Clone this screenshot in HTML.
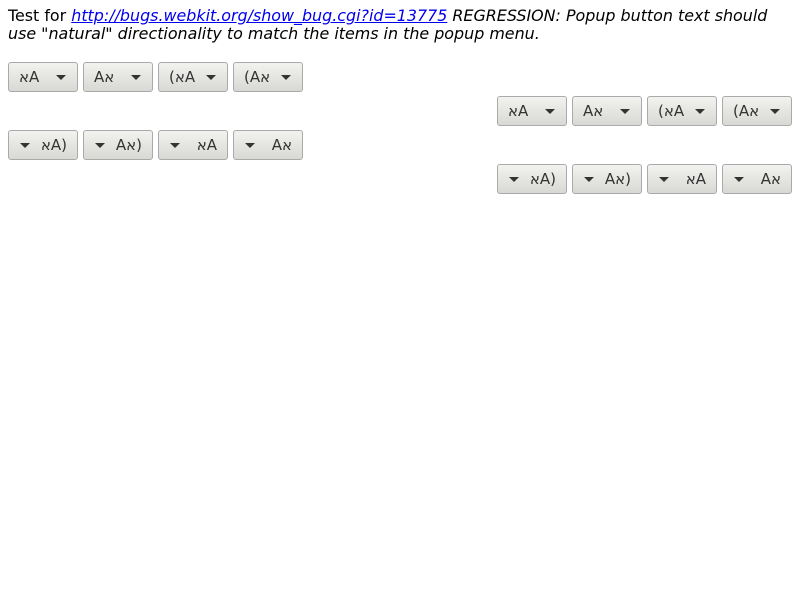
<!DOCTYPE html>
<html><head><meta charset="utf-8"><style>
body{margin:0;background:#fff;font-family:"DejaVu Sans","Liberation Sans",sans-serif;}
p{position:absolute;left:8px;top:7px;margin:0;font-size:15.9px;line-height:18px;width:790px;color:#000}
a{color:#00e}
.b{position:absolute;width:68px;height:28px;border:1px solid #aaa;border-radius:3px;background:linear-gradient(#f2f2f0,#d8d8d4);box-sizing:content-box;font-size:15px;color:#333;}
.t{position:absolute;top:5px;line-height:18px;white-space:pre}
.a{position:absolute;top:12px;width:0;height:0;border-left:5px solid transparent;border-right:5px solid transparent;border-top:5px solid #333}
.l .t{left:10px}.l .a{left:47px}
.r .t{right:10px}.r .a{left:11px}
</style></head><body>
<p>Test for <a href="#"><i>http://bugs.webkit.org/show_bug.cgi?id=13775</i></a> <i>REGRESSION: Popup button text should use "natural" directionality to match the items in the popup menu.</i></p>

<div class="b l" style="left:8px;top:62px"><bdo dir="ltr" class="t">אA</bdo><span class="a"></span></div>
<div class="b l" style="left:83px;top:62px"><bdo dir="ltr" class="t">Aא</bdo><span class="a"></span></div>
<div class="b l" style="left:158px;top:62px"><bdo dir="ltr" class="t">(אA</bdo><span class="a"></span></div>
<div class="b l" style="left:233px;top:62px"><bdo dir="ltr" class="t">(Aא</bdo><span class="a"></span></div>

<div class="b l" style="left:497px;top:96px"><bdo dir="ltr" class="t">אA</bdo><span class="a"></span></div>
<div class="b l" style="left:572px;top:96px"><bdo dir="ltr" class="t">Aא</bdo><span class="a"></span></div>
<div class="b l" style="left:647px;top:96px"><bdo dir="ltr" class="t">(אA</bdo><span class="a"></span></div>
<div class="b l" style="left:722px;top:96px"><bdo dir="ltr" class="t">(Aא</bdo><span class="a"></span></div>

<div class="b r" style="left:8px;top:130px"><span class="a"></span><bdo dir="ltr" class="t">אA)</bdo></div>
<div class="b r" style="left:83px;top:130px"><span class="a"></span><bdo dir="ltr" class="t">Aא)</bdo></div>
<div class="b r" style="left:158px;top:130px"><span class="a"></span><bdo dir="ltr" class="t">אA</bdo></div>
<div class="b r" style="left:233px;top:130px"><span class="a"></span><bdo dir="ltr" class="t">Aא</bdo></div>

<div class="b r" style="left:497px;top:164px"><span class="a"></span><bdo dir="ltr" class="t">אA)</bdo></div>
<div class="b r" style="left:572px;top:164px"><span class="a"></span><bdo dir="ltr" class="t">Aא)</bdo></div>
<div class="b r" style="left:647px;top:164px"><span class="a"></span><bdo dir="ltr" class="t">אA</bdo></div>
<div class="b r" style="left:722px;top:164px"><span class="a"></span><bdo dir="ltr" class="t">Aא</bdo></div>
</body></html>
